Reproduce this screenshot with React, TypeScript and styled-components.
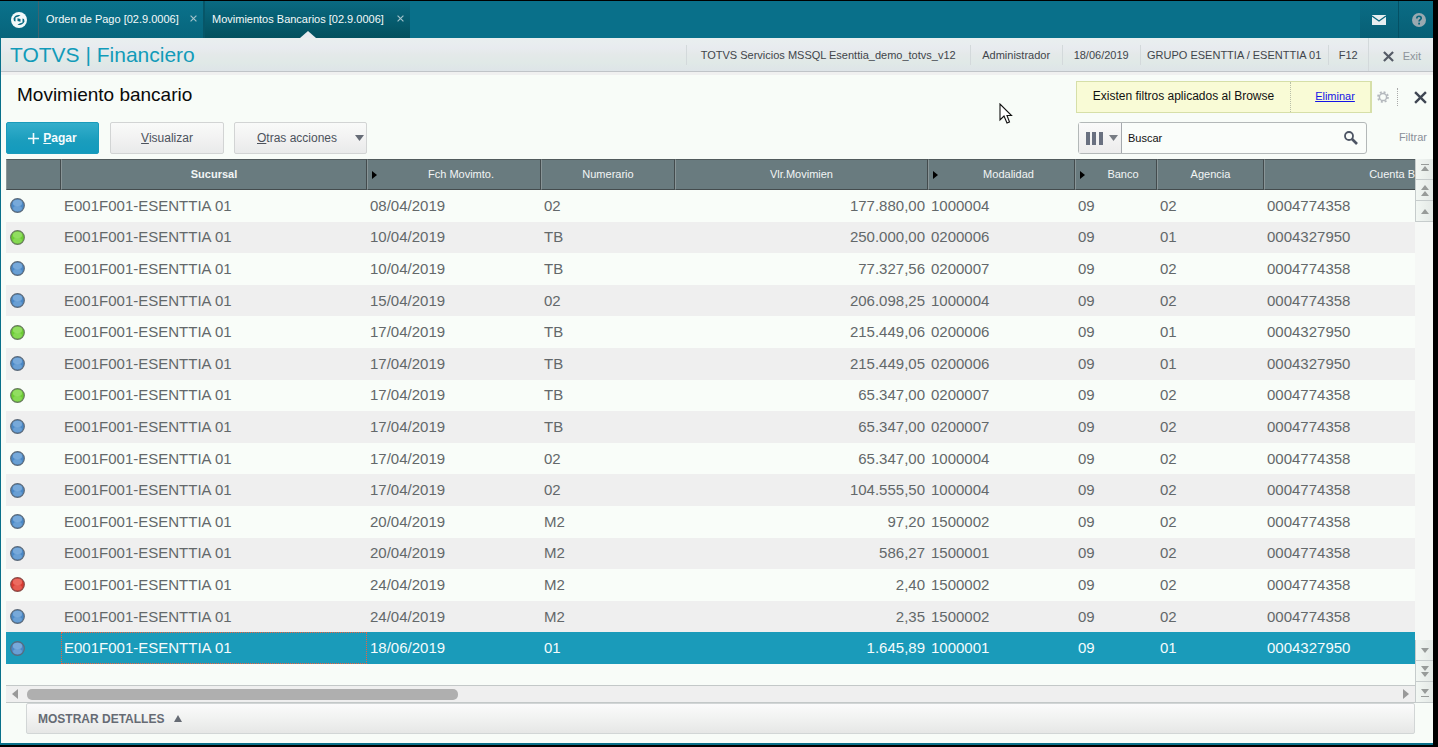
import React from "react";
import styled, { createGlobalStyle } from "styled-components";

const GlobalStyle = createGlobalStyle`
  *, *::before, *::after { box-sizing: border-box; }
  body {
    margin: 0;
    background: #000;
    font-family: "Liberation Sans", Arial, sans-serif;
    font-size: 11px;
    color: #3f454b;
  }
  button, input { font: inherit; color: inherit; margin: 0; padding: 0; }
  button { border: 0; background: none; }
  h1, h2 { margin: 0; font-weight: 400; }
`;

const Shell = styled.div`
  min-height: 100vh;
  display: flex;
  flex-direction: column;
  padding: 1px 5px 2px 0;
`;

const Frame = styled.div`
  flex: 1;
  display: flex;
  flex-direction: column;
  background: #f8fcf8;
  border-bottom: 2px solid #09708a;
  border-left: 1px solid #09708a;
`;

const TabBar = styled.nav`
  display: flex;
  height: 37px;
  margin-left: -1px;
  background: #09708a;
`;

const HomeButton = styled.button`
  width: 39px;
  display: flex;
  align-items: center;
  justify-content: center;
  border-right: 1px solid #3d6470;
  background: linear-gradient(#0a728c, #07647b);
`;

const Tab = styled.div<{ $active?: boolean }>`
  position: relative;
  display: flex;
  align-items: center;
  gap: 7px;
  padding: 0 6px 2px 7px;
  border-right: ${(p) => (p.$active ? "0" : "2px solid #075668")};
  background: ${(p) =>
    p.$active ? "linear-gradient(#0a6a82, #03505e)" : "linear-gradient(#0a728c, #07657c)"};
`;

const TabLabel = styled.button<{ $wide?: boolean }>`
  width: ${(p) => (p.$wide ? "178px" : "137px")};
  color: #f4fafa;
  text-align: left;
  white-space: nowrap;
`;

const TabClose = styled.button`
  display: flex;
  color: #a3c3cb;
`;

const TabPointer = styled.span`
  position: absolute;
  left: 50%;
  bottom: 0;
  margin-left: -8px;
  border: 8px solid transparent;
  border-top-width: 0;
  border-bottom: 7px solid #e9ebef;
`;

const TabTools = styled.div`
  display: flex;
  margin-left: auto;
`;

const ToolButton = styled.button<{ $last?: boolean }>`
  width: ${(p) => (p.$last ? "34px" : "39px")};
  display: flex;
  align-items: center;
  justify-content: center;
  padding-left: ${(p) => (p.$last ? "5px" : "0")};
  border-right: ${(p) => (p.$last ? "0" : "1px solid #045064")};
  background: linear-gradient(#0a6c85, #075f75);
`;

const InfoBar = styled.header`
  display: flex;
  align-items: center;
  height: 34px;
  padding-left: 9px;
  border-bottom: 1px solid #c0c4c8;
  background: linear-gradient(#e9efef 0%, #e8ebef 30%, #e4e9e9 50%, #e0e9e7 75%, #dee4e8 100%);
`;

const Product = styled.h1`
  flex: 1;
  font-size: 21px;
  line-height: 24px;
  color: #129bb9;
  white-space: nowrap;
`;

const InfoItem = styled.span<{ $width: number }>`
  width: ${(p) => p.$width}px;
  height: 20px;
  line-height: 20px;
  border-left: 1px solid #d3d9db;
  text-align: center;
  white-space: nowrap;
`;

const ExitButton = styled.button`
  align-self: stretch;
  display: flex;
  align-items: center;
  gap: 9px;
  padding: 3px 12px 0 14px;
  border-left: 1px solid #d3d9db;
  color: #8d939a;
`;

const Main = styled.main`
  flex: 1;
  display: flex;
  flex-direction: column;
  border-top: 3px solid #f0f0f0;
`;

const TitleRow = styled.div`
  display: flex;
  align-items: center;
  height: 38px;
  margin-top: 6px;
  padding: 0 6px 6px 16px;
`;

const Title = styled.h2`
  flex: 1;
  padding-bottom: 4px;
  font-size: 19px;
  line-height: 22px;
  color: #0a0a0a;
`;

const FilterNotice = styled.div`
  display: flex;
  width: 296px;
  height: 32px;
  line-height: 28px;
  border: 1px solid #d6dfa8;
  border-right-width: 2px;
  background: #f9fbd6;
  color: #111;
  text-align: center;
`;

const NoticeText = styled.span`
  flex: 1;
  border-right: 1px dotted #b9bfa8;
  font-size: 12px;
`;

const NoticeLink = styled.a`
  width: 79px;
  padding-left: 9px;
  color: #1414e6;
`;

const IconButton = styled.button`
  display: flex;
  align-items: center;
  justify-content: center;
`;

const Gear = styled(IconButton)`
  width: 26px;
  height: 18px;
  border-right: 1px dotted #aaa;
  padding-right: 3px;
`;

const CloseView = styled(IconButton)`
  margin-left: 16px;
`;

const ActionRow = styled.div`
  display: flex;
  align-items: center;
  height: 32px;
  margin: 3px 6px 5px 5px;
`;

const Action = styled.button<{ $primary?: boolean; $width: number }>`
  display: flex;
  align-items: center;
  justify-content: center;
  gap: 4px;
  width: ${(p) => p.$width}px;
  height: 32px;
  margin-right: ${(p) => (p.$primary ? 11 : 10)}px;
  border: ${(p) => (p.$primary ? "1px solid #1a9bbb" : "1px solid #d2d4d4")};
  border-radius: 2px;
  font-size: 12px;
  font-weight: ${(p) => (p.$primary ? 700 : 400)};
  color: ${(p) => (p.$primary ? "#f4fbfd" : "#4c525c")};
  background: ${(p) =>
    p.$primary
      ? "linear-gradient(#34aecb, #1a9dbd 60%, #139abd)"
      : "linear-gradient(#f9faf9, #f3f3f3 45%, #e9eaea)"};
`;

const MenuAction = styled(Action)`
  justify-content: space-between;
  padding: 0 2px 0 22px;
`;

const SearchBox = styled.form`
  display: flex;
  width: 289px;
  height: 32px;
  margin-left: auto;
  border: 1px solid #b3b8b8;
  border-radius: 3px;
  background: #fafdfa;
`;

const ColumnPicker = styled.button`
  display: flex;
  align-items: center;
  justify-content: space-between;
  width: 43px;
  padding: 0 3px 0 7px;
  border-right: 1px solid #a5a9ad;
  background: linear-gradient(#fafafa, #ececec);
`;

const SearchInput = styled.input`
  flex: 1;
  min-width: 0;
  padding-left: 6px;
  border: 0;
  outline: 0;
  background: transparent;
  color: #111;
`;

const SearchButton = styled(IconButton)`
  width: 30px;
`;

const FilterLabel = styled.button`
  width: 60px;
  padding-bottom: 2px;
  text-align: right;
  color: #8a8f98;
`;

const Browser = styled.section`
  flex: 1;
  display: flex;
  margin-left: 5px;
`;

const GridArea = styled.div`
  flex: 1;
  min-width: 0;
  display: flex;
  flex-direction: column;
  justify-content: space-between;
`;

const Grid = styled.table`
  width: 100%;
  height: 505px;
  table-layout: fixed;
  border-collapse: separate;
  border-spacing: 0;
`;

const Head = styled.th<{ $bold?: boolean; $end?: boolean; $mark?: boolean }>`
  position: relative;
  height: 31px;
  padding: 0 0 2px ${(p) => (p.$mark ? "14px" : "0")};
  border-top: 1px solid #525b5d;
  border-bottom: 1px solid #444c4e;
  border-left: 1px solid #899597;
  border-right: ${(p) => (p.$end ? "0" : "1px solid #434b4d")};
  background: #697b7f;
  color: #f2f5f5;
  font-weight: ${(p) => (p.$bold ? 700 : 400)};
  text-align: ${(p) => (p.$end ? "right" : "center")};
  white-space: nowrap;
`;

const SortMark = styled.svg`
  position: absolute;
  left: 4px;
  top: 11px;
`;

const Row = styled.tr<{ $selected?: boolean }>`
  background: #f9fdf9;
  color: #63686a;
  &:nth-child(even) { background: #efefef; }
  ${(p) => p.$selected && "&& { background: #1a9bba; color: #f4fbfd; }"}
`;

const Cell = styled.td<{ $right?: boolean; $focus?: boolean }>`
  padding: 0 ${(p) => (p.$focus ? "2px" : "3px")};
  border: ${(p) => (p.$focus ? "1px dotted #f0603c" : "0")};
  font-size: 15px;
  line-height: ${(p) => (p.$focus ? "16px" : "18px")};
  text-align: ${(p) => (p.$right ? "right" : "left")};
  white-space: nowrap;
`;

const balls = {
  blue: ["#a4caee", "#4a88c6", "#5b6a7a"],
  green: ["#b5f08c", "#6ccc34", "#667a5c"],
  red: ["#ff9a8c", "#d83a32", "#8a4a46"],
};

const Ball = styled.svg`
  display: block;
  margin-left: 1px;
`;

const HScroll = styled.div`
  display: flex;
  align-items: center;
  justify-content: space-between;
  height: 18px;
  padding: 0 6px;
  border-top: 1px solid #c3c8c8;
  border-bottom: 1px solid #c3c8c8;
  background: #efefef;
`;

const Track = styled.div`
  flex: 1;
  margin: 0 8px 0 9px;
`;

const Thumb = styled.div`
  width: 431px;
  max-width: 100%;
  height: 11px;
  border-radius: 5px;
  background: #afafaf;
`;

const VScroll = styled.div`
  display: flex;
  flex-direction: column;
  justify-content: space-between;
  width: 18px;
  background: #f6f8f6;
`;

const StepButton = styled(IconButton)`
  width: 18px;
  height: 21px;
  border-left: 1px solid #c6cccc;
  border-bottom: 1px solid #c6cccc;
  background: linear-gradient(90deg, #f2f7f3, #e4e9e6);
`;

const Details = styled.button`
  display: flex;
  align-items: center;
  gap: 10px;
  height: 31px;
  margin: 0 18px 9px 25px;
  padding-left: 11px;
  border: 1px solid #d2d6d6;
  border-radius: 2px;
  background: linear-gradient(#fbfbfb, #f1f2f1 50%, #e6e7e6);
  color: #666b74;
  font-size: 12px;
  font-weight: 700;
`;

const Pointer = styled.svg`
  position: absolute;
  left: 999px;
  top: 103px;
  pointer-events: none;
`;

const Cross = ({ size, weight, color = "currentColor" }: { size: number; weight: number; color?: string }) => (
  <svg width={size} height={size} viewBox="0 0 12 12" aria-hidden="true">
    <path d="M1 1 11 11M11 1 1 11" stroke={color} strokeWidth={weight} fill="none" />
  </svg>
);

const Caret = ({ color = "#666c76" }: { color?: string }) => (
  <svg width="9" height="6" viewBox="0 0 9 6" aria-hidden="true">
    <path d="M0 0H9L4.500 6Z" fill={color} />
  </svg>
);

const StatusBall = ({ tone }: { tone: keyof typeof balls }) => {
  const [light, deep, rim] = balls[tone];
  return (
    <Ball width="15" height="15" viewBox="0 0 15 15" role="img" aria-label={tone}>
      <circle cx="7.500" cy="7.500" r="6.800" fill={deep} stroke={rim} strokeWidth="1.200" />
      <ellipse cx="7.500" cy="5" rx="4.600" ry="3.200" fill={light} opacity="0.5" />
      <ellipse cx="7.500" cy="10.500" rx="4.400" ry="2.800" fill={light} opacity="0.35" />
    </Ball>
  );
};

const stepShapes: Record<string, string> = {
  first: "M1 0H9V1H1ZM1 7H9L5 2Z",
  pageUp: "M1 5H9L5 0ZM1 11H9L5 6Z",
  up: "M1 8H9L5 3Z",
  down: "M1 3H9L5 8Z",
  pageDown: "M1 0H9L5 5ZM1 6H9L5 11Z",
  last: "M1 2H9L5 7ZM1 9H9V10H1Z",
};

const Step = ({ kind, label }: { kind: string; label: string }) => (
  <StepButton type="button" aria-label={label}>
    <svg width="10" height="11" viewBox="0 0 10 11" aria-hidden="true">
      <path d={stepShapes[kind]} fill="#979b99" />
    </svg>
  </StepButton>
);

const columns = [
  { name: "", width: 55 },
  { name: "Sucursal", width: 306, bold: true },
  { name: "Fch Movimto.", width: 174, mark: true },
  { name: "Numerario", width: 134 },
  { name: "Vlr.Movimien", width: 253 },
  { name: "Modalidad", width: 147, mark: true },
  { name: "Banco", width: 82, mark: true },
  { name: "Agencia", width: 107 },
  { name: "Cuenta B", end: true },
];

type Tone = keyof typeof balls;
const rows: [Tone, string, string, string, string, string][] = [
  ["blue", "08/04/2019", "02", "177.880,00", "1000004", "02"],
  ["green", "10/04/2019", "TB", "250.000,00", "0200006", "01"],
  ["blue", "10/04/2019", "TB", "77.327,56", "0200007", "02"],
  ["blue", "15/04/2019", "02", "206.098,25", "1000004", "02"],
  ["green", "17/04/2019", "TB", "215.449,06", "0200006", "01"],
  ["blue", "17/04/2019", "TB", "215.449,05", "0200006", "01"],
  ["green", "17/04/2019", "TB", "65.347,00", "0200007", "02"],
  ["blue", "17/04/2019", "TB", "65.347,00", "0200007", "02"],
  ["blue", "17/04/2019", "02", "65.347,00", "1000004", "02"],
  ["blue", "17/04/2019", "02", "104.555,50", "1000004", "02"],
  ["blue", "20/04/2019", "M2", "97,20", "1500002", "02"],
  ["blue", "20/04/2019", "M2", "586,27", "1500001", "02"],
  ["red", "24/04/2019", "M2", "2,40", "1500002", "02"],
  ["blue", "24/04/2019", "M2", "2,35", "1500002", "02"],
  ["blue", "18/06/2019", "01", "1.645,89", "1000001", "01"],
];
const accounts: Record<string, string> = { "01": "0004327950", "02": "0004774358" };

export default function App() {
  return (
    <Shell>
      <GlobalStyle />
      <Frame>
        <TabBar>
          <HomeButton type="button" aria-label="Inicio">
            <svg width="18" height="18" viewBox="0 0 18 18" aria-hidden="true">
              <circle cx="9" cy="9" r="8" fill="#f3f9fa" />
              <path d="M3.500 7.500Q5.500 3.200 10.500 4.200L8.500 5.500L5.500 6.500V10.500L4 10Z" fill="#086a82" />
              <path d="M14.500 10.500Q12.500 14.800 7.500 13.800L9.500 12.500L12.500 11.500V7.500L14 8Z" fill="#086a82" />
              <path d="M7.500 7.200L10.500 8V10.800L7.500 10Z" fill="#086a82" />
            </svg>
          </HomeButton>
          <Tab>
            <TabLabel type="button">Orden de Pago [02.9.0006]</TabLabel>
            <TabClose type="button" aria-label="Cerrar Orden de Pago"><Cross size={7} weight={2} /></TabClose>
          </Tab>
          <Tab $active>
            <TabLabel type="button" $wide>Movimientos Bancarios [02.9.0006]</TabLabel>
            <TabClose type="button" aria-label="Cerrar Movimientos Bancarios"><Cross size={7} weight={2} /></TabClose>
            <TabPointer />
          </Tab>
          <TabTools>
            <ToolButton type="button" aria-label="Mensajes">
              <svg width="14" height="10" viewBox="0 0 14 10" aria-hidden="true">
                <rect width="14" height="10" fill="#e8eef0" />
                <path d="M0 1 7 6 14 1" fill="none" stroke="#08657c" strokeWidth="1.300" />
              </svg>
            </ToolButton>
            <ToolButton type="button" aria-label="Ayuda" $last>
              <svg width="14" height="14" viewBox="0 0 14 14" aria-hidden="true">
                <circle cx="7" cy="7" r="7" fill="#9aa9b0" />
                <path d="M4.800 5.400C4.800 2.500 9.300 2.600 9.200 5.200C9.100 6.700 7.100 6.800 7.100 8.600" fill="none" stroke="#08657c" strokeWidth="1.700" />
                <rect x="6.200" y="9.700" width="1.800" height="1.800" fill="#08657c" />
              </svg>
            </ToolButton>
          </TabTools>
        </TabBar>

        <InfoBar>
          <Product>TOTVS | Financiero</Product>
          <InfoItem $width={284}>TOTVS Servicios MSSQL Esenttia_demo_totvs_v12</InfoItem>
          <InfoItem $width={92}>Administrador</InfoItem>
          <InfoItem $width={78}>18/06/2019</InfoItem>
          <InfoItem $width={188}>GRUPO ESENTTIA / ESENTTIA 01</InfoItem>
          <InfoItem $width={40}>F12</InfoItem>
          <ExitButton type="button"><Cross size={11} weight={2.4} color="#555b66" />Exit</ExitButton>
        </InfoBar>

        <Main>
          <TitleRow>
            <Title>Movimiento bancario</Title>
            <FilterNotice>
              <NoticeText>Existen filtros aplicados al Browse</NoticeText>
              <NoticeLink href="#eliminar">Eliminar</NoticeLink>
            </FilterNotice>
            <Gear type="button" aria-label="Configurar">
              <svg width="12" height="12" viewBox="0 0 12 12" aria-hidden="true">
                <circle cx="6" cy="6" r="3.600" fill="none" stroke="#b4b8bd" strokeWidth="1.500" />
                <circle cx="6" cy="6" r="5" fill="none" stroke="#b4b8bd" strokeWidth="1.700" strokeDasharray="2 1.927" />
              </svg>
            </Gear>
            <CloseView type="button" aria-label="Cerrar"><Cross size={13} weight={2.2} color="#3f4653" /></CloseView>
          </TitleRow>

          <ActionRow>
            <Action type="button" $primary $width={93}>
              <svg width="11" height="11" viewBox="0 0 11 11" aria-hidden="true">
                <path d="M5.500 0V11M0 5.500H11" stroke="#f4fbfd" strokeWidth="1.600" />
              </svg>
              <span><u>P</u>agar</span>
            </Action>
            <Action type="button" $width={114}><span><u>V</u>isualizar</span></Action>
            <MenuAction type="button" $width={133} aria-haspopup="menu"><span><u>O</u>tras acciones</span><Caret /></MenuAction>
            <SearchBox onSubmit={(e) => e.preventDefault()}>
              <ColumnPicker type="button" aria-label="Columnas">
                <svg width="17" height="13" viewBox="0 0 17 13" aria-hidden="true">
                  <path d="M0 0H4V13H0ZM6 0H10V13H6ZM13 0H17V13H13Z" fill="#697080" />
                </svg>
                <Caret color="#777c84" />
              </ColumnPicker>
              <SearchInput type="text" aria-label="Buscar" defaultValue="Buscar" />
              <SearchButton type="submit" aria-label="Buscar">
                <svg width="14" height="14" viewBox="0 0 14 14" aria-hidden="true">
                  <circle cx="5" cy="5" r="4" fill="none" stroke="#4d5564" strokeWidth="1.800" />
                  <path d="M8 8 13 13" stroke="#4d5564" strokeWidth="2.600" />
                </svg>
              </SearchButton>
            </SearchBox>
            <FilterLabel type="button">Filtrar</FilterLabel>
          </ActionRow>

          <Browser>
            <GridArea>
              <Grid>
                <colgroup>
                  {columns.map((c, i) => <col key={i} width={c.width} />)}
                </colgroup>
                <thead>
                  <tr>
                    {columns.map((c, i) => (
                      <Head key={i} $bold={c.bold} $end={c.end} $mark={c.mark}>
                        {c.mark && (
                          <SortMark width="5" height="8" viewBox="0 0 5 8" aria-hidden="true">
                            <path d="M0 0V8L5 4Z" fill="#000" />
                          </SortMark>
                        )}
                        {c.name}
                      </Head>
                    ))}
                  </tr>
                </thead>
                <tbody>
                  {rows.map(([tone, date, kind, amount, mode, agency], i) => {
                    const selected = i === rows.length - 1;
                    return (
                      <Row key={i} $selected={selected}>
                        <Cell><StatusBall tone={tone} /></Cell>
                        <Cell $focus={selected}>E001F001-ESENTTIA 01</Cell>
                        <Cell>{date}</Cell>
                        <Cell>{kind}</Cell>
                        <Cell $right>{amount}</Cell>
                        <Cell>{mode}</Cell>
                        <Cell>09</Cell>
                        <Cell>{agency}</Cell>
                        <Cell>{accounts[agency]}</Cell>
                      </Row>
                    );
                  })}
                </tbody>
              </Grid>
              <HScroll>
                <svg width="6" height="10" viewBox="0 0 6 10" aria-hidden="true"><path d="M6 0V10L0 5Z" fill="#999" /></svg>
                <Track><Thumb /></Track>
                <svg width="6" height="10" viewBox="0 0 6 10" aria-hidden="true"><path d="M0 0V10L6 5Z" fill="#999" /></svg>
              </HScroll>
            </GridArea>
            <VScroll>
              <div>
                <Step kind="first" label="Primero" />
                <Step kind="pageUp" label="Página anterior" />
                <Step kind="up" label="Subir" />
              </div>
              <div>
                <Step kind="down" label="Bajar" />
                <Step kind="pageDown" label="Página siguiente" />
                <Step kind="last" label="Último" />
              </div>
            </VScroll>
          </Browser>
          <Details type="button">
            MOSTRAR DETALLES
            <svg width="8" height="7" viewBox="0 0 8 7" aria-hidden="true">
              <path d="M0 7H8L4 0Z" fill="#666b74" />
            </svg>
          </Details>
        </Main>
      </Frame>
      <Pointer width="14" height="21" viewBox="0 0 14 21" aria-hidden="true">
        <path d="M1 1V17L5 13L8 20L10.500 19L8 12.500H12.500Z" fill="#fff" stroke="#111" strokeWidth="1.100" />
      </Pointer>
    </Shell>
  );
}
